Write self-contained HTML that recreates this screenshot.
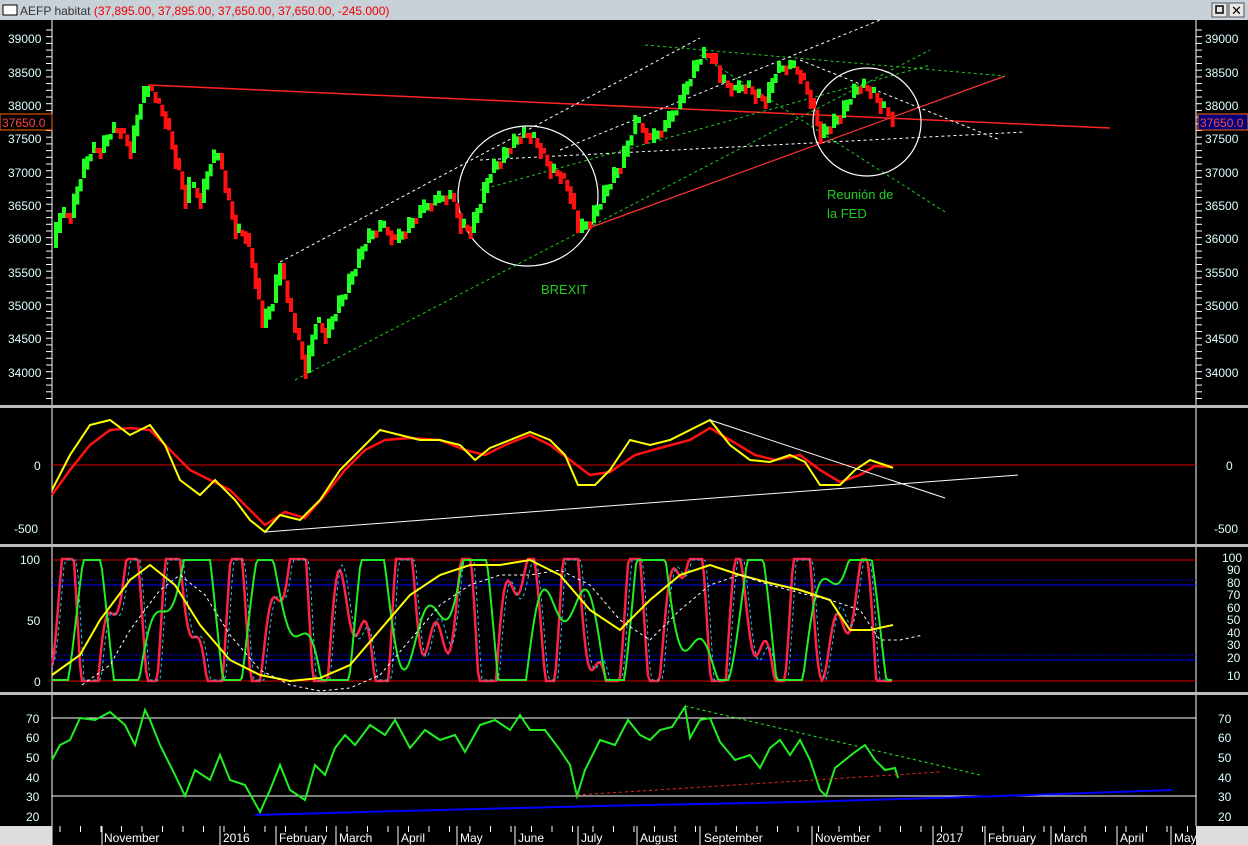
<!DOCTYPE html><html><head><meta charset="utf-8"><style>
body{margin:0;width:1248px;height:845px;overflow:hidden;background:#000;font-family:"Liberation Sans",sans-serif}
svg{display:block}
</style></head><body>
<svg id="s" width="1248" height="845" xmlns="http://www.w3.org/2000/svg" font-family="Liberation Sans, sans-serif">
<rect width="1248" height="845" fill="#000"/>
<rect x="0" y="0" width="1248" height="20" fill="#c8d0d8"/>
<rect x="3" y="5" width="14" height="10" fill="#fff" stroke="#000"/>
<text x="20" y="15" font-size="12" fill="#333">AEFP habitat <tspan fill="#e00">(37,895.00, 37,895.00, 37,650.00, 37,650.00, -245.000)</tspan></text>
<rect x="1212" y="3" width="15" height="14" fill="#e8e8e8" stroke="#555"/><rect x="1216" y="6" width="7" height="7" fill="none" stroke="#000" stroke-width="1.5"/>
<rect x="1229" y="3" width="15" height="14" fill="#e8e8e8" stroke="#555"/><text x="1231" y="15" font-size="13" fill="#000">✕</text>
<line x1="52" y1="20" x2="52" y2="845" stroke="#fff"/>
<line x1="1196" y1="20" x2="1196" y2="826" stroke="#fff"/>
<rect x="0" y="405" width="1248" height="3" fill="#bbb"/>
<rect x="0" y="544" width="1248" height="3" fill="#bbb"/>
<rect x="0" y="692" width="1248" height="3" fill="#bbb"/>
<rect x="0" y="826" width="52" height="19" fill="#ddd"/>
<rect x="1196" y="826" width="52" height="19" fill="#ddd"/>
<g id="g"></g>
<g font-size="12" fill="#dff">
<text x="8" y="43">39000</text><text x="8" y="77">38500</text><text x="8" y="110">38000</text><text x="8" y="143">37500</text><text x="8" y="177">37000</text><text x="8" y="210">36500</text><text x="8" y="243">36000</text><text x="8" y="277">35500</text><text x="8" y="310">35000</text><text x="8" y="343">34500</text><text x="8" y="377">34000</text>
<text x="1205" y="43">39000</text><text x="1205" y="77">38500</text><text x="1205" y="110">38000</text><text x="1205" y="143">37500</text><text x="1205" y="177">37000</text><text x="1205" y="210">36500</text><text x="1205" y="243">36000</text><text x="1205" y="277">35500</text><text x="1205" y="310">35000</text><text x="1205" y="343">34500</text><text x="1205" y="377">34000</text>
<text x="34" y="470">0</text><text x="14" y="533">-500</text><text x="1226" y="470">0</text><text x="1214" y="533">-500</text>
<text x="20" y="564">100</text><text x="27" y="625">50</text><text x="34" y="686">0</text>
<text x="1222" y="562">100</text><text x="1227" y="574">90</text><text x="1227" y="587">80</text><text x="1227" y="599">70</text><text x="1227" y="612">60</text><text x="1227" y="624">50</text><text x="1227" y="637">40</text><text x="1227" y="649">30</text><text x="1227" y="662">20</text><text x="1227" y="680">10</text>
<text x="26" y="723">70</text><text x="26" y="742">60</text><text x="26" y="762">50</text><text x="26" y="782">40</text><text x="26" y="801">30</text><text x="26" y="821">20</text>
<text x="1218" y="723">70</text><text x="1218" y="742">60</text><text x="1218" y="762">50</text><text x="1218" y="782">40</text><text x="1218" y="801">30</text><text x="1218" y="821">20</text>
</g>
<rect x="1198" y="114" width="50" height="16" fill="#000080" stroke="#f60"/><text x="1200" y="127" font-size="12" fill="#f44">37650.0</text>
<rect x="0" y="114" width="52" height="16" fill="#000" stroke="#f60"/><text x="2" y="127" font-size="12" fill="#f44">37650.0</text>
<g font-size="12" fill="#fff">
<text x="104" y="842">November</text><text x="223" y="842">2016</text><text x="279" y="842">February</text><text x="339" y="842">March</text><text x="401" y="842">April</text><text x="460" y="842">May</text><text x="518" y="842">June</text><text x="581" y="842">July</text><text x="640" y="842">August</text><text x="704" y="842">September</text><text x="815" y="842">November</text><text x="936" y="842">2017</text><text x="988" y="842">February</text><text x="1054" y="842">March</text><text x="1120" y="842">April</text><text x="1174" y="842">May</text>
</g>
<text x="541" y="294" font-size="13" fill="#2c2">BREXIT</text>
<text x="827" y="199" font-size="13" fill="#2c2">Reunión de</text>
<text x="827" y="218" font-size="13" fill="#2c2">la FED</text>
</svg>
<script>
var g=document.getElementById('g'),NS='http://www.w3.org/2000/svg';
function el(t,a){var e=document.createElementNS(NS,t);for(var k in a)e.setAttribute(k,a[k]);g.appendChild(e);return e}
function L(x1,y1,x2,y2,c,d,w){el('line',{x1:x1,y1:y1,x2:x2,y2:y2,stroke:c,'stroke-width':w||1,'stroke-dasharray':d||''})}
function P(pts,c,w,d){el('polyline',{points:pts.map(function(p){return p.join(',')}).join(' '),fill:'none',stroke:c,'stroke-width':w||2,'stroke-dasharray':d||''})}
for(var y=30;y<405;y+=6.7){L(46,y,52,y,'#fff');L(1196,y,1202,y,'#fff')}
for(var x=60;x<1196;x+=20.5){L(x,826,x,832,'#fff')}
[102,220,276,336,398,457,515,578,637,700,812,933,985,1051,1117,1171].forEach(function(x){L(x,826,x,845,'#fff')});
var pr=[[52,245],[60,215],[70,215],[80,175],[90,150],[100,150],[110,130],[120,130],[130,150],[140,100],[148,88],[155,100],[165,120],[175,160],[185,200],[190,185],[200,200],[210,160],[218,155],[225,190],[235,230],[245,235],[255,280],[262,325],[272,300],[280,265],[287,300],[295,330],[305,370],[315,320],[325,335],[335,310],[345,290],[355,265],[365,240],[380,225],[395,240],[405,230],[420,210],[435,200],[450,195],[460,225],[470,230],[480,200],[490,170],[500,160],[510,145],[520,135],[530,135],[540,150],[550,170],[560,175],[570,195],[578,230],[590,220],[600,200],[610,180],[620,165],[635,120],[650,140],[665,125],[680,100],[690,75],[700,55],[712,55],[720,80],[735,90],[745,85],[755,95],[765,100],[775,70],[790,65],[800,75],[810,100],[820,135],[830,125],[840,115],[850,95],[860,85],[870,90],[880,105],[893,118]];
L(148,85,1110,128,'#f22','',1.5);L(578,232,1005,76,'#f33','',1.2);
L(280,262,700,38,'#fff','3,3');L(295,380,930,50,'#2c2','3,3');L(645,45,1005,76,'#2c2','3,3');L(700,55,945,212,'#2c2','3,3');
L(480,160,1025,132,'#fff','3,3');L(560,150,880,20,'#fff','3,3');L(800,60,1000,140,'#fff','3,3');L(480,190,930,65,'#2c2','3,3');
el('circle',{cx:528,cy:196,r:70,fill:'none',stroke:'#fff','stroke-width':1.2});
el('circle',{cx:867,cy:122,r:54,fill:'none',stroke:'#fff','stroke-width':1.2});
for(var i=1;i<pr.length;i++){var a=pr[i-1],b=pr[i],n=Math.max(1,Math.round((b[0]-a[0])/4));for(var j=0;j<n;j++){var x=a[0]+(b[0]-a[0])*j/n+2,y1=a[1]+(b[1]-a[1])*j/n,y2=a[1]+(b[1]-a[1])*(j+1)/n+((j*7)%5-2)*3;var c=y2<y1?'#2f2':'#f11';el('rect',{x:x,y:Math.min(y1,y2)-2,width:4,height:Math.abs(y2-y1)+5,fill:c})}}
L(52,465,1196,465,'#d00');
var yel=[[52,490],[70,455],[90,425],[110,420],[130,435],[150,425],[165,445],[180,480],[200,495],[215,480],[235,500],[250,520],[265,532],[280,515],[300,520],[320,500],[340,470],[360,450],[380,430],[400,435],[420,440],[440,440],[460,445],[475,460],[490,448],[510,440],[530,432],[550,440],[565,455],[578,485],[595,485],[610,470],[630,440],[650,445],[670,440],[690,430],[710,420],[730,445],[750,460],[770,462],[790,455],[805,462],[820,485],[840,485],[855,470],[870,460],[885,465],[893,468]];
var red=[[52,495],[70,470],[90,445],[110,430],[130,428],[150,430],[170,450],[190,470],[210,480],[230,490],[250,510],[265,525],[285,512],[305,518],[325,495],[345,470],[365,450],[385,440],[410,438],[440,440],[465,450],[485,455],[505,445],[530,435],[550,445],[570,460],[590,475],[610,472],[635,455],[660,448],[690,440],[710,428],[730,440],[755,455],[775,460],[800,455],[820,470],[840,482],[860,475],[875,466],[893,467]];
P(red,'#f11',2.5);P(yel,'#ff0',2);
L(265,532,1018,475,'#fff','',1);L(710,420,945,498,'#fff','',1);
L(52,560,1196,560,'#d00');L(52,681,1196,681,'#d00');
L(52,580,1196,580,'#00f',1.5);L(52,585,1196,585,'#00f');L(52,655,1196,655,'#00f',1.5);L(52,660,1196,660,'#00f');
function osc(seed,amp,per,x1){var p=[];for(var x=52;x<=x1;x+=2){var t=x/per;var v=Math.sin(t+seed)+0.7*Math.sin(t*1.7+seed*2)+0.4*Math.sin(t*0.43+seed);v=Math.max(-1,Math.min(1,v*1.2));p.push([x,620-amp*v])}return p}
P(osc(0.5,61,9,893),'#f24',2.5);P(osc(0.2,60,9,893),'#2cf',1,'3,3');P(osc(1.8,60,15,893),'#2e2',2);
var ys=[[52,675],[80,655],[100,620],[130,580],[150,565],[175,585],[200,625],[230,660],[260,675],[290,681],[320,678],[350,665],[380,630],[410,595],[440,575],[470,565],[500,565],[530,560],[560,575],[590,610],[620,630],[650,600],[680,575],[710,565],[740,575],[770,583],[800,590],[830,600],[850,630],[870,630],[893,625]];
P(ys,'#ff0',2);P(ys.map(function(p){return [p[0]+30,p[1]+10]}),'#fff',1,'3,3');
L(52,718,1196,718,'#fff');L(52,796,1196,796,'#fff');
var gr=[[52,760],[60,745],[70,740],[80,718],[95,720],[110,712],[125,725],[135,745],[145,710],[150,720],[160,745],[175,775],[185,796],[195,770],[210,780],[220,755],[230,780],[245,785],[260,812],[270,790],[280,765],[290,790],[305,800],[315,765],[325,775],[335,748],[345,735],[355,745],[370,725],[385,735],[395,720],[410,748],[425,730],[440,740],[455,735],[465,752],[480,725],[495,720],[510,730],[520,715],[530,730],[545,730],[560,750],[570,765],[577,796],[585,770],[600,740],[615,745],[628,720],[640,735],[650,740],[660,730],[672,727],[685,707],[690,738],[700,720],[710,718],[720,742],[735,760],[750,755],[760,768],[770,748],[780,740],[790,755],[800,740],[810,760],[820,790],[826,796],[835,768],[845,760],[855,752],[865,745],[875,760],[885,770],[895,768],[898,778]];
P(gr,'#2e2',2);
L(685,706,980,775,'#2e2','3,3');L(577,795,940,772,'#e22','3,3');
el('polyline',{points:'255,815 400,811 600,806 800,802 1000,796 1172,790',fill:'none',stroke:'#00f','stroke-width':2});
</script>
</body></html>
